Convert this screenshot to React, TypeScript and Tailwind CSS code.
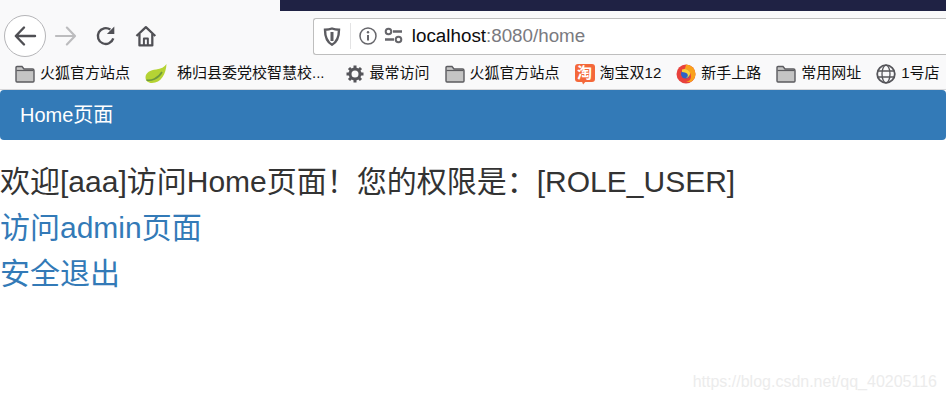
const cjk = "font-['Liberation_Sans','Noto_Sans_CJK_SC',sans-serif]";

function Folder() {
  return (
    <svg width="20" height="20" viewBox="0 0 20 20" className="shrink-0">
      <path d="M1 17V3.500a1 1 0 011-1h5l2 2.500h8.500a1.500 1.500 0 011.500 1.500V17a1 1 0 01-1 1H2a1 1 0 01-1-1z" fill="#c4c4c4" stroke="#5b5b5f" strokeWidth="1.400" />
      <path d="M1.500 6.500h17" stroke="#5b5b5f" strokeWidth="1.200" />
    </svg>
  );
}

function Leaf() {
  return (
    <svg width="22" height="20" viewBox="0 0 22 20" className="shrink-0">
      <path d="M21.500 0C21 10 16 19 7 19 3 19 .5 16.500.5 13.500c0-5 5-7.500 10.500-8 5-.5 8.500-2.500 10.500-5.500z" fill="#b5d334" />
      <path d="M1.500 16C6 17 13 15 17 8" stroke="#6f9a3c" strokeWidth="1.600" fill="none" />
    </svg>
  );
}

function Gear() {
  return (
    <svg width="20" height="20" viewBox="0 0 20 20" className="shrink-0">
      <circle cx="10" cy="10" r="5" fill="none" stroke="#55555a" strokeWidth="3" />
      <g stroke="#55555a" strokeWidth="3">
        <path d="M10 1.500v3M10 15.500v3M1.500 10h3M15.500 10h3M4 4l2.100 2.100M13.900 13.900L16 16M16 4l-2.100 2.100M6.100 13.900L4 16" />
      </g>
    </svg>
  );
}

function Taobao() {
  return (
    <div className="relative flex items-center justify-center shrink-0 w-[20px] h-[18px] mb-[3px] rounded-[3px] bg-[#f4683a] text-white text-[15px] font-bold leading-none">
      淘
      <div className="absolute left-[7px] top-[17px] w-[5px] h-[4px] bg-[#f4683a] [clip-path:polygon(0_0,100%_0,30%_100%)]" />
    </div>
  );
}

function FirefoxLogo() {
  return (
    <svg width="20" height="20" viewBox="0 0 20 20" className="shrink-0">
      <circle cx="10" cy="10" r="9.500" fill="#e8413c" />
      <path d="M10 .5A9.500 9.500 0 0119.500 10c0 3-1.500 6-4 7.500-2 1-4 .5-5.500 0 3 0 5-2 5-5 0-4-3-7-7-6 1-2 2-5 2-6z" fill="#f9a11b" />
      <circle cx="9.500" cy="10" r="4.500" fill="#2d62c7" />
      <path d="M6 5.500c3-1.500 7 0 8 3 .5 2-1 5-4 5.500 2-1 2.500-3 1-4.500-1-1-3-1-5-1.500z" fill="#fbd13a" />
    </svg>
  );
}

function Globe() {
  return (
    <svg width="20" height="20" viewBox="0 0 20 20" fill="none" stroke="#55555a" className="shrink-0">
      <circle cx="10" cy="10" r="8.800" strokeWidth="1.800" />
      <ellipse cx="10" cy="10" rx="4" ry="8.800" strokeWidth="1.300" />
      <path d="M1.500 7h17M1.500 13h17" strokeWidth="1.300" />
    </svg>
  );
}

function Bookmark({ icon, label, className }: { icon: React.ReactNode; label: string; className: string }) {
  return (
    <div className={`flex items-center shrink-0 ${className}`}>
      {icon}
      <span className="text-[15px] text-[#111] whitespace-nowrap mb-[2px]">{label}</span>
    </div>
  );
}

export default function App() {
  return (
    <div className={`relative w-[946px] h-[400px] overflow-hidden bg-white ${cjk}`}>
      {/* browser chrome */}
      <div className="bg-[#f9f9fa]">
        <div className="flex justify-end">
          <div className="w-[666px] h-[11px] bg-[#1f2244]" />
        </div>
        <div className="flex items-center h-[49px] pl-[4px] pt-px">
          <div className="flex items-center justify-center w-[42px] h-[42px] rounded-full border border-[#b5b5b8] bg-white">
            <svg width="24" height="24" viewBox="0 0 24 24" fill="none" stroke="#4f4f54" strokeWidth="2.400" strokeLinecap="round" strokeLinejoin="round">
              <path d="M22 12H3M11 3.500L2.800 12l8.200 8.500" />
            </svg>
          </div>
          <svg className="ml-[8px]" width="24" height="24" viewBox="0 0 24 24" fill="none" stroke="#bcbcbe" strokeWidth="2.200" strokeLinecap="round" strokeLinejoin="round">
            <path d="M2 12h19M13 3.500l8.200 8.500-8.200 8.500" />
          </svg>
          <svg className="ml-[18px]" width="22" height="22" viewBox="0 0 22 22" fill="none" stroke="#505055" strokeWidth="2.400">
            <path d="M18.500 13.500A8 8 0 1115.500 4.500" />
            <path d="M19.500 1.500v7.500h-7.500z" fill="#505055" stroke="none" />
          </svg>
          <svg className="ml-[18px]" width="22" height="22" viewBox="0 0 22 22" fill="none" stroke="#505055" strokeWidth="2.300" strokeLinejoin="round">
            <path d="M1.500 11L11 2l9.500 9" />
            <path d="M4.500 9v11.500h13V9" />
            <path d="M9 20.500v-7h4v7" strokeWidth="2" />
          </svg>
          <div className="flex items-center ml-[156px] w-[640px] h-[37px] bg-white border border-r-0 border-[#bebebe] rounded-l-[3px]">
            <svg className="ml-[9px]" width="18" height="19" viewBox="0 0 18 19" fill="none" stroke="#5c5c61" strokeWidth="2.400">
              <path d="M9 1.500c2.500 1 5 1.200 7 1.200 0 7-1.500 12-7 15-5.500-3-7-8-7-15 2 0 4.500-.2 7-1.200z" />
              <path d="M9 5v9" strokeWidth="3" />
            </svg>
            <div className="ml-[9px] w-px h-[26px] bg-[#e3e3e4]" />
            <svg className="ml-[8px]" width="18" height="18" viewBox="0 0 18 18" fill="none" stroke="#66666b">
              <circle cx="9" cy="9" r="8" strokeWidth="1.500" />
              <path d="M9 8v5.500" strokeWidth="2" />
              <circle cx="9" cy="5.200" r="1.200" fill="#66666b" stroke="none" />
            </svg>
            <svg className="ml-[7px]" width="19" height="18" viewBox="0 0 19 18" fill="none" stroke="#66666b" strokeWidth="2">
              <circle cx="4.500" cy="4.500" r="2.800" />
              <path d="M9 4.500h9M1 12.500h9" strokeWidth="2.400" />
              <circle cx="14.500" cy="12.500" r="2.800" />
            </svg>
            <div className="ml-[9px] text-[18.800px] leading-none whitespace-nowrap">
              <span className="text-[#0c0c0d]">localhost</span>
              <span className="text-[#7a7a80]">:8080/home</span>
            </div>
          </div>
        </div>
        <div className="flex items-center h-[29px] pl-[15px] pb-[1px]">
          <Bookmark icon={<Folder />} label="火狐官方站点" className="gap-[5px]" />
          <Bookmark icon={<Leaf />} label="秭归县委党校智慧校..." className="gap-[10px] ml-[15px]" />
          <Bookmark icon={<Gear />} label="最常访问" className="gap-[5px] ml-[20px]" />
          <Bookmark icon={<Folder />} label="火狐官方站点" className="gap-[5px] ml-[15px]" />
          <Bookmark icon={<Taobao />} label="淘宝双12" className="gap-[5px] ml-[15px]" />
          <Bookmark icon={<FirefoxLogo />} label="新手上路" className="gap-[5px] ml-[15px]" />
          <Bookmark icon={<Folder />} label="常用网址" className="gap-[5px] ml-[15px]" />
          <Bookmark icon={<Globe />} label="1号店" className="gap-[5px] ml-[15px]" />
        </div>
      </div>
      <div className="h-px bg-[#d6d6d8]" />

      {/* page */}
      <div className="flex items-center h-[50px] pl-[20px] bg-[#337ab7] rounded-[4px] text-white text-[20px] leading-none">
        Home页面
      </div>
      <div className="mt-[19px] text-[30px] leading-[46px]">
        <div className="text-[#333]">欢迎[aaa]访问Home页面！您的权限是：[ROLE_USER]</div>
        <div><a className="text-[#337ab7]">访问admin页面</a></div>
        <div><a className="text-[#337ab7]">安全退出</a></div>
      </div>

      {/* watermark */}
      <div className="absolute right-[9px] bottom-[10px] text-[16px] leading-none text-[#ececec]">
        https://blog.csdn.net/qq_40205116
      </div>
    </div>
  );
}
